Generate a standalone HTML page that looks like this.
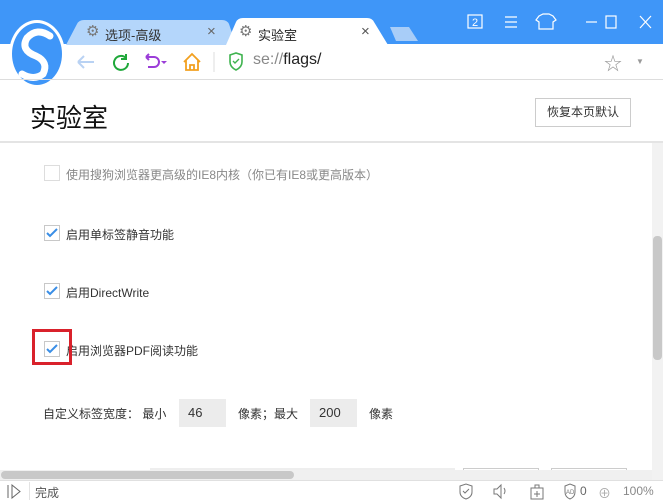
<!DOCTYPE html>
<html><head><meta charset="utf-8"><style>
*{margin:0;padding:0;box-sizing:border-box}
body{width:663px;height:502px;overflow:hidden;background:#fff;font-family:"Liberation Sans","Noto Sans CJK SC",sans-serif;position:relative;color:#333}
.a{position:absolute}
.cb{position:absolute;width:16px;height:16px;border:1px solid #c8c8c8;background:#fff}
.cb svg{position:absolute;left:1px;top:2px}
.t{position:absolute;font-size:12px;color:#333;white-space:nowrap}
</style></head><body>
<div class="a" style="left:0;top:0;width:663px;height:44px;background:#3f96f8"></div>
<svg class="a" style="left:0;top:0" width="663" height="45">
<path d="M66 45 L77 24 Q79 20 84 20 L222 20 Q227 20 229 24 L236 45Z" fill="#b4d6fb"/>
<path d="M226 45 L236 22 Q238 18 243 18 L367 18 Q372 18 374 22 L388 45Z" fill="#fff"/>
<path d="M390 27 L409 27 L418 41 L396 41Z" fill="#a8cdf8"/>
</svg>
<div class="a" style="left:86px;top:22px;color:#777;font-size:15px">⚙</div>
<div class="t" style="left:105px;top:25px;font-size:13px;color:#333">选项-高级</div>
<div class="t" style="left:207px;top:23px;font-size:15px;color:#666">×</div>
<div class="a" style="left:239px;top:22px;color:#777;font-size:15px">⚙</div>
<div class="t" style="left:258px;top:25px;font-size:13px;color:#222">实验室</div>
<div class="t" style="left:361px;top:23px;font-size:15px;color:#555">×</div>
<svg class="a" style="left:460px;top:10px" width="200" height="24" stroke="#fff" fill="none" stroke-width="1.2">
<rect x="8" y="5" width="14" height="13"/><text x="12" y="16" font-size="11" fill="#fff" stroke="none" font-family="Liberation Sans">2</text>
<path d="M45 7h12M45 12h12M45 17h12"/>
<path d="M79 6l4-2h6l4 2 3 4-3 2v7H79v-7l-3-2z"/>
<path d="M126 12h11"/>
<rect x="146" y="6" width="10" height="12"/>
<path d="M180 6l11 12M191 6l-11 12"/>
</svg>
<svg class="a" style="left:4px;top:18px" width="66" height="72"><ellipse cx="33" cy="36" rx="28" ry="34" fill="#fff"/><ellipse cx="33" cy="36" rx="25" ry="31" fill="#3f96f8"/><path d="M46 18 Q33 9 23 20 Q16 32 32 38 Q45 44 39 56 Q30 63 18 56" stroke="#fff" stroke-width="7" fill="none" stroke-linecap="round"/></svg>
<div class="a" style="left:0;top:79px;width:663px;height:1px;background:#ddd"></div>
<svg class="a" style="left:74px;top:50px" width="260" height="24" fill="none" stroke-width="2">
<path d="M4 12h16M4 12l6-6M4 12l6 6" stroke="#b9d2f3"/>
<path d="M52 8a7 7 0 1 0 2 5M52 4v5h-5" stroke="#1fa83a"/>
<path d="M72 7h8a5 5 0 0 1 0 10h-6M72 7l3-3M72 7l3 3" stroke="#9b3dd8"/>
<path d="M87 11l3 3 3-3z" fill="#9b3dd8" stroke="none"/>
<path d="M110 12l8-8 8 8M112 10v10h12V10M116 20v-5h4v5" stroke="#f2a020" stroke-width="1.8"/>
<path d="M140 2v20" stroke="#ddd" stroke-width="1"/>
<path d="M156 5l6-2 6 2v7q0 5-6 8-6-3-6-8z" stroke="#3fb34f" stroke-width="1.6"/><path d="M159 11l2 2 4-4" stroke="#3fb34f" stroke-width="1.4"/>
</svg>
<div class="t" style="left:253px;top:51px;font-size:16px;color:#888">se://<span style="color:#222">flags/</span></div>
<div class="a" style="left:604px;top:50px;font-size:18px;color:#999">☆</div>
<div class="a" style="left:636px;top:57px;font-size:8px;color:#999">▼</div>
<div class="t" style="left:30px;top:98px;font-size:26px;color:#111">实验室</div>
<div class="a" style="left:535px;top:98px;width:96px;height:29px;border:1px solid #ccc;font-size:12px;text-align:center;line-height:27px;color:#333">恢复本页默认</div>
<div class="a" style="left:0;top:141px;width:663px;height:2px;background:#e4e4e4"></div>
<div class="a" style="left:652px;top:143px;width:11px;height:337px;background:#f2f2f2"></div>
<div class="a" style="left:653px;top:236px;width:9px;height:124px;background:#c8c8c8;border-radius:4px"></div>
<div class="cb" style="left:44px;top:165px;border-color:#ddd"></div>
<div class="t" style="left:66px;top:166px;color:#888">使用搜狗浏览器更高级的IE8内核（你已有IE8或更高版本）</div>
<div class="cb" style="left:44px;top:225px"><svg width="12" height="10"><path d="M1 5l3 3 7-7" stroke="#3a8ee6" stroke-width="2" fill="none"/></svg></div>
<div class="t" style="left:66px;top:226px">启用单标签静音功能</div>
<div class="cb" style="left:44px;top:283px"><svg width="12" height="10"><path d="M1 5l3 3 7-7" stroke="#3a8ee6" stroke-width="2" fill="none"/></svg></div>
<div class="t" style="left:66px;top:284px">启用DirectWrite</div>
<div class="cb" style="left:44px;top:341px"><svg width="12" height="10"><path d="M1 5l3 3 7-7" stroke="#3a8ee6" stroke-width="2" fill="none"/></svg></div>
<div class="t" style="left:66px;top:342px">启用浏览器PDF阅读功能</div>
<div class="a" style="left:32px;top:329px;width:40px;height:36px;border:3px solid #d9212b"></div>
<div class="t" style="left:43px;top:405px">自定义标签宽度： 最小</div>
<div class="a" style="left:179px;top:399px;width:47px;height:28px;background:#ececec;font-size:13px;line-height:28px;padding-left:9px">46</div>
<div class="t" style="left:238px;top:405px">像素；最大</div>
<div class="a" style="left:310px;top:399px;width:47px;height:28px;background:#ececec;font-size:13px;line-height:28px;padding-left:9px">200</div>
<div class="t" style="left:369px;top:405px">像素</div>
<div class="a" style="left:150px;top:468px;width:305px;height:12px;background:#eee"></div>
<div class="a" style="left:463px;top:468px;width:76px;height:12px;border:1px solid #ccc;border-bottom:none"></div>
<div class="a" style="left:551px;top:468px;width:76px;height:12px;border:1px solid #ccc;border-bottom:none"></div>
<div class="a" style="left:0;top:470px;width:652px;height:10px;background:#f0f0f0"></div>
<div class="a" style="left:1px;top:471px;width:293px;height:8px;background:#c8c8c8;border-radius:4px"></div>
<div class="a" style="left:0;top:480px;width:663px;height:22px;background:#fff;border-top:1px solid #e0e0e0"></div>
<div class="a" style="left:29px;top:482px;width:1px;height:18px;background:#e3e3e3"></div>
<svg class="a" style="left:6px;top:484px" width="16" height="15" fill="none" stroke="#666" stroke-width="1"><path d="M2 1v13M6 1l8 6.5L6 14z"/></svg>
<div class="t" style="left:35px;top:484px;color:#555">完成</div>
<svg class="a" style="left:458px;top:483px" width="140" height="17" fill="none" stroke="#777" stroke-width="1">
<path d="M2 3l6-2 6 2v6q0 5-6 7-6-2-6-7z M5 8l2 2 4-4"/>
<path d="M36 6h3l4-4v13l-4-4h-3z M46 5q2 3 0 6"/>
<path d="M73 5h12v11H73z M77 5V2h4v3 M79 8v6M76 11h6"/>
<path d="M107 3l5-2 5 2v6q0 5-5 7-5-2-5-7z"/><text x="108" y="11" font-size="6" fill="#777" stroke="none">AD</text>
</svg>
<div class="t" style="left:580px;top:484px;color:#666">0</div>
<div class="t" style="left:598px;top:483px;color:#aaa;font-size:13px">⊕</div>
<div class="t" style="left:623px;top:484px;color:#888">100%</div>
</body></html>
